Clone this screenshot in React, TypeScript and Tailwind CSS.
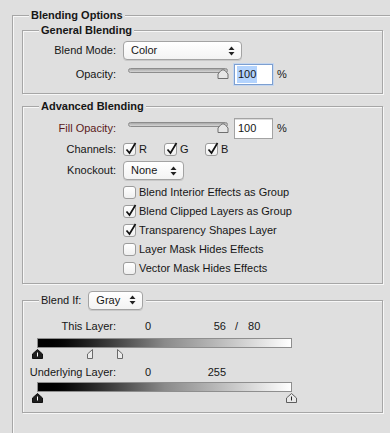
import React from "react";

const etched =
  "border border-[#a6a6a6] shadow-[inset_1px_1px_0_#f7f7f7,1px_1px_0_#f7f7f7]";

function UpDown() {
  return (
    <svg width="7" height="10" viewBox="0 0 7 10" className="shrink-0">
      <path d="M3.5 0.5 L6.5 4 L0.5 4 Z" fill="#222" />
      <path d="M3.5 9.5 L6.5 6 L0.5 6 Z" fill="#222" />
    </svg>
  );
}

function Select({ value, width }: { value: string; width: string }) {
  return (
    <div
      className={`${width} h-[19px] flex items-center justify-between pl-[7px] pr-[6px] rounded-[4px] border border-[#a3a3a3] bg-linear-to-b from-white to-[#f3f3f3] shadow-[0_1px_0_#c8c8c8]`}
    >
      <span>{value}</span>
      <UpDown />
    </div>
  );
}

function Check({ checked }: { checked?: boolean }) {
  return (
    <div className="relative w-[13px] h-[13px] shrink-0 rounded-[3px] border border-[#9c9c9c] bg-linear-to-b from-white to-[#efefef]">
      {checked && (
        <svg
          width="14"
          height="15"
          viewBox="0 0 14 15"
          className="absolute left-[0px] top-[-3px]"
        >
          <path
            d="M2.5 8.5 L5.5 12 L11.5 2"
            fill="none"
            stroke="#111"
            strokeWidth="1.7"
          />
        </svg>
      )}
    </div>
  );
}

function Slider() {
  return (
    <div className="relative ml-[5px] w-[100px] h-[21px]">
      <div className="absolute left-0 right-0 top-[4px] h-[5px] rounded-full border border-[#8c8c8c] bg-linear-to-b from-[#a9a9a9] to-[#d6d6d6]" />
      <svg
        width="12"
        height="10"
        viewBox="0 0 12 10"
        className="absolute left-[89px] top-[5px]"
      >
        <path
          d="M4 1.5 Q6 0 8 1.5 L11 5 L11 9.5 L1 9.5 L1 5 Z"
          fill="#e6e6e6"
          stroke="#6f6f6f"
        />
      </svg>
    </div>
  );
}

function PercentInput({ focused }: { focused?: boolean }) {
  return (
    <div className="flex items-center">
      <div
        className={`ml-[6px] w-[39px] h-[21px] flex items-center pl-[2px] bg-white border ${
          focused
            ? "border-[#7d9fd0] shadow-[0_0_0_1px_#c4d6ef]"
            : "border-[#a3a3a3] shadow-[inset_0_1px_0_#dcdcdc]"
        }`}
      >
        <span className={focused ? "bg-[#b3d3fd] px-[1px]" : "px-[1px]"}>
          100
        </span>
      </div>
      <span className="ml-[4px]">%</span>
    </div>
  );
}

function Thumb({
  kind,
  left,
}: {
  kind: "black" | "white" | "halfL" | "halfR";
  left: number;
}) {
  return (
    <svg
      width="11"
      height="10"
      viewBox="0 0 11 10"
      className="absolute top-[1px]"
      style={{ left }}
    >
      {kind === "black" && (
        <>
          <path
            d="M5.5 0.5 L10.5 5 L10.5 9.5 L0.5 9.5 L0.5 5 Z"
            fill="#1e1e1e"
            stroke="#111"
          />
          <path d="M5.5 3.5 L5.5 7.5" stroke="#fff" strokeWidth="1" />
        </>
      )}
      {kind === "white" && (
        <>
          <path
            d="M5.5 0.5 L10.5 5 L10.5 9.5 L0.5 9.5 L0.5 5 Z"
            fill="#e9e9e9"
            stroke="#5e5e5e"
          />
          <path d="M5.5 3.5 L5.5 7.5" stroke="#222" strokeWidth="1" />
        </>
      )}
      {kind === "halfL" && (
        <path
          d="M5.5 0.5 L5.5 9.5 L0.5 9.5 L0.5 5 Z"
          fill="#ececec"
          stroke="#6a6a6a"
        />
      )}
      {kind === "halfR" && (
        <path
          d="M5.5 0.5 L5.5 9.5 L10.5 9.5 L10.5 5 Z"
          fill="#ececec"
          stroke="#6a6a6a"
        />
      )}
    </svg>
  );
}

function GradientBar({ thumbs }: { thumbs: React.ReactNode }) {
  return (
    <div className="ml-[14px] w-[255px]">
      <div className="h-[10px] border border-[#8e8e8e] bg-linear-to-r from-black via-[#8a8a8a] to-white" />
      <div className="relative h-[10px]">{thumbs}</div>
    </div>
  );
}

const legendCls = "ml-[16px] px-[2px] font-bold bg-[#dfdfdf] leading-[16px]";
const labelCls = "w-[93px] text-right shrink-0";

export default function App() {
  const checks: [string, boolean][] = [
    ["Blend Interior Effects as Group", false],
    ["Blend Clipped Layers as Group", true],
    ["Transparency Shapes Layer", true],
    ["Layer Mask Hides Effects", false],
    ["Vector Mask Hides Effects", false],
  ];

  return (
    <div
      className="w-[390px] h-[433px] overflow-hidden bg-[#dfdfdf] text-[11px] text-[#161616] pt-[7px]"
      style={{ fontFamily: '"Liberation Sans", Arial, sans-serif' }}
    >
      <fieldset
        className={`ml-[12px] w-[380px] h-[440px] border-l border-t border-r-0 border-b-0 border-[#a6a6a6] shadow-[inset_1px_1px_0_#f7f7f7]`}
      >
        <legend className={legendCls}>Blending Options</legend>

        {/* General Blending */}
        <fieldset className={`ml-[9px] w-[361px] -mt-[1px] pb-[8px] ${etched}`}>
          <legend className={legendCls}>General Blending</legend>
          <div className="flex items-center h-[19px] mt-[3px]">
            <span className={labelCls}>Blend Mode:</span>
            <div className="ml-[7px]">
              <Select value="Color" width="w-[119px]" />
            </div>
          </div>
          <div className="flex items-center h-[21px] mt-[4px]">
            <span className={labelCls}>Opacity:</span>
            <div className="ml-[7px] flex items-center">
              <Slider />
              <PercentInput focused />
            </div>
          </div>
        </fieldset>

        {/* Advanced Blending */}
        <fieldset className={`ml-[9px] w-[361px] mt-[4px] pb-[5px] ${etched}`}>
          <legend className={legendCls}>Advanced Blending</legend>
          <div className="flex items-center h-[21px] mt-[4px]">
            <span className={`${labelCls} text-[#5a1a1a]`}>Fill Opacity:</span>
            <div className="ml-[7px] flex items-center">
              <Slider />
              <PercentInput />
            </div>
          </div>
          <div className="flex items-center h-[21px]">
            <span className={labelCls}>Channels:</span>
            <div className="ml-[7px] flex">
              {["R", "G", "B"].map((c) => (
                <div key={c} className="w-[41px] flex items-center gap-[3px]">
                  <Check checked />
                  <span>{c}</span>
                </div>
              ))}
            </div>
          </div>
          <div className="flex items-center h-[21px]">
            <span className={labelCls}>Knockout:</span>
            <div className="ml-[7px]">
              <Select value="None" width="w-[61px]" />
            </div>
          </div>
          <div className="mt-[2px] ml-[100px]">
            {checks.map(([label, on]) => (
              <div key={label} className="flex items-center gap-[3px] h-[19px]">
                <Check checked={on} />
                <span>{label}</span>
              </div>
            ))}
          </div>
        </fieldset>

        {/* Blend If */}
        <fieldset className={`ml-[9px] w-[361px] mt-[6px] pb-[10px] ${etched}`}>
          <legend className="ml-[16px] pl-[2px] pr-[3px] bg-[#dfdfdf] flex items-center h-[20px]">
            <span>Blend If:</span>
            <div className="ml-[7px]">
              <Select value="Gray" width="w-[55px]" />
            </div>
          </legend>
          <div className="flex items-center h-[16px] mt-[8px]">
            <span className={labelCls}>This Layer:</span>
            <span className="ml-[29px] w-[6px]">0</span>
            <span className="w-[75px] text-right">56</span>
            <span className="ml-[9px]">/</span>
            <span className="ml-[10px]">80</span>
          </div>
          <div className="mt-[4px]">
            <GradientBar
              thumbs={
                <>
                  <Thumb kind="black" left={-5} />
                  <Thumb kind="halfL" left={50} />
                  <Thumb kind="halfR" left={75} />
                </>
              }
            />
          </div>
          <div className="flex items-center h-[16px] mt-[6px]">
            <span className={labelCls}>Underlying Layer:</span>
            <span className="ml-[29px] w-[6px]">0</span>
            <span className="w-[75px] text-right">255</span>
          </div>
          <div className="mt-[2px]">
            <GradientBar
              thumbs={
                <>
                  <Thumb kind="black" left={-5} />
                  <Thumb kind="white" left={249} />
                </>
              }
            />
          </div>
        </fieldset>
      </fieldset>
    </div>
  );
}
